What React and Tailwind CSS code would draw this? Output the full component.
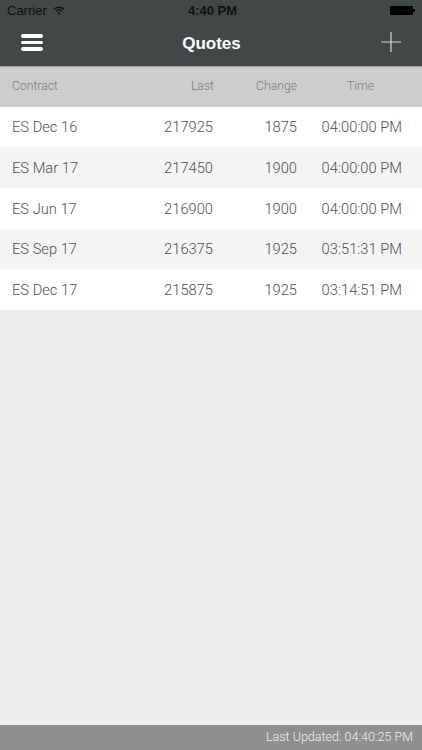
import React from 'react';

const quotes = [
  { name: 'ES Dec 16', last: '217925', change: '1875', time: '04:00:00 PM' },
  { name: 'ES Mar 17', last: '217450', change: '1900', time: '04:00:00 PM' },
  { name: 'ES Jun 17', last: '216900', change: '1900', time: '04:00:00 PM' },
  { name: 'ES Sep 17', last: '216375', change: '1925', time: '03:51:31 PM' },
  { name: 'ES Dec 17', last: '215875', change: '1925', time: '03:14:51 PM' },
];

const App = () => {
  return (
    <div className="w-[422px] h-[750px] flex flex-col overflow-hidden bg-[#eeeeee] font-['Liberation_Sans',Arial,sans-serif]">
      {/* status bar + nav */}
      <div className="h-[66px] bg-[#424747] flex flex-col">
        <div className="h-[21px] px-[7px] flex items-center justify-between text-[13px] text-[#111]">
          <div className="flex items-center gap-[6px] w-[123px]">
            <span>Carrier</span>
            <svg width="12" height="9" viewBox="0 0 14 10" fill="none" stroke="#111" strokeWidth="1.6">
              <path d="M1 3.6 C4.5 0.4 9.5 0.4 13 3.6" />
              <path d="M3.2 5.8 C5.4 3.9 8.6 3.9 10.8 5.8" />
              <path d="M7 9.6 L5.2 7.8 C6.3 6.9 7.7 6.9 8.8 7.8 Z" fill="#111" stroke="none" />
            </svg>
          </div>
          <span className="font-bold">4:40 PM</span>
          <div className="w-[120px] flex justify-end items-center">
            <div className="w-[23px] h-[9px] bg-black rounded-[1px]" />
            <div className="w-[1.5px] h-[3px] bg-black" />
          </div>
        </div>
        <div className="flex-1 flex items-center justify-between px-[21px]">
          <div className="w-[22px] flex flex-col gap-[3px] -mt-[2px]">
            <div className="h-[3.4px] bg-white rounded-full" />
            <div className="h-[3.4px] bg-white rounded-full" />
            <div className="h-[3.4px] bg-white rounded-full" />
          </div>
          <span className="text-white font-bold text-[17px] -ml-[1px]">Quotes</span>
          <svg className="-mt-[4px]" width="20" height="20" viewBox="0 0 20 20" stroke="#d4d6d6" strokeWidth="1.2">
            <path d="M10 0 V20 M0 10 H20" />
          </svg>
        </div>
      </div>

      {/* column headers */}
      <div className="h-[40.5px] pb-[2px] bg-[#cdcdcd] border-t border-[#9a9c9c] flex items-center pl-[12px] text-[12.2px] font-light text-[#7c7c7c] font-['Roboto',sans-serif]">
        <span className="w-[150px]">Contract</span>
        <span className="w-[52px] text-right">Last</span>
        <span className="w-[83px] text-right">Change</span>
        <span className="w-[77px] text-right">Time</span>
      </div>

      {/* rows */}
      <div>
        {quotes.map((q, i) => (
          <div
            key={q.name}
            className={`h-[40.7px] pt-[1px] flex items-center pl-[12px] pr-[20px] text-[14.7px] font-light text-[#4f4f4f] font-['Roboto',sans-serif] ${i % 2 === 0 ? 'bg-white' : 'bg-[#f4f4f4]'}`}
          >
            <span className="w-[150px]">{q.name}</span>
            <span className="w-[51px] text-right">{q.last}</span>
            <span className="w-[84px] text-right">{q.change}</span>
            <span className="flex-1 text-right">{q.time}</span>
          </div>
        ))}
      </div>

      <div className="flex-1" />

      {/* footer */}
      <div className="h-[25px] bg-[#8e8e8e] flex items-center justify-end pr-[9px] text-[12.5px] font-light text-[#f2f2f2] font-['Roboto',sans-serif]">
        Last Updated: 04:40:25 PM
      </div>
    </div>
  );
};

export default App;
